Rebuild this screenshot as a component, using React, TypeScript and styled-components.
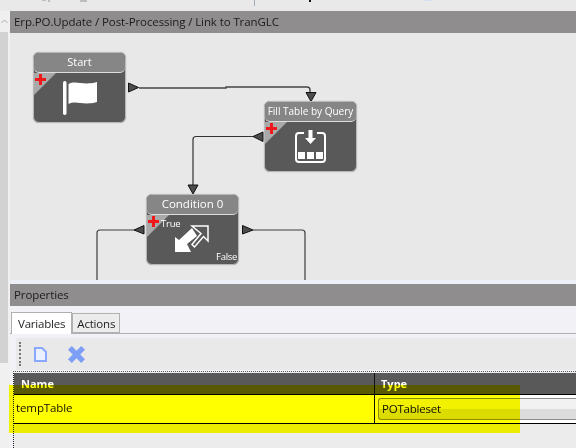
import React from "react";
import styled, { createGlobalStyle } from "styled-components";

const Global = createGlobalStyle`
  html, body { margin: 0; padding: 0; }
  body { width: 576px; height: 448px; overflow: hidden; background: #f0f0f0; font-family: "Open Sans", "Noto Sans", sans-serif; }
`;
const Screen = styled.div`
  position: relative; width: 576px; height: 448px; overflow: hidden; display: grid;
  grid-template-columns: 10px 1fr; grid-template-rows: 11px 1fr; background: #f0f0f0;
`;
const TopStrip = styled.svg`grid-column: 1 / 3; display: block; background: #e9e9e9;`;
const Rail = styled.div`grid-row: 2; width: 8px; height: 352px; display: flex; flex-direction: column; background: #d2d2d2;`;
const RailCap = styled.div`height: 21px; flex: none; background: #efefef; display: flex; align-items: center; justify-content: center;`;
const Main = styled.div`display: flex; flex-direction: column; min-width: 0; grid-row: 2; grid-column: 2;`;
const TitleBar = styled.div`
  height: 22px; flex: none; background: #8f8d8d; color: #1c1c1c; font-size: 11.5px; letter-spacing: -.1px; line-height: 22px; padding-left: 4px;
  white-space: nowrap;
`;
const Canvas = styled.div`position: relative; height: 247px; flex: none; background: #e8e8e8; overflow: hidden;`;
const Gutter = styled.div`height: 4px; flex: none; background: #eef0f8;`;
const Panel = styled.div`flex: 1; background: #f2f2f6; display: flex; flex-direction: column;`;
const Tabs = styled.div`display: flex; align-items: flex-end; height: 28px; flex: none; padding-left: 1px; border-bottom: 1px solid #b0b0b0; box-sizing: border-box;`;
const Tab = styled.div<{ $active?: boolean }>`
  height: ${p => (p.$active ? 22 : 20)}px; box-sizing: border-box; padding: 0 ${p => (p.$active ? 6 : 4)}px;
  background: ${p => (p.$active ? "#fff" : "#ececec")}; border: 1px solid #b0b0b0;
  border-bottom: ${p => (p.$active ? "0" : "1px solid #b0b0b0")}; margin-bottom: ${p => (p.$active ? -1 : 0)}px;
  font-size: 11.5px; letter-spacing: -.2px; line-height: ${p => (p.$active ? 21 : 19)}px; color: #1e1e1e;
`;
const Toolbar = styled.div`
  display: flex; align-items: center; gap: 21px; height: 32px; margin: 4px 0 0 6px; padding-left: 18px; flex: none;
  background: #e9e9e9; border-radius: 3px 0 0 3px; position: relative;
`;
const Grip = styled.div`position: absolute; left: 3px; top: 4px; bottom: 4px; border-left: 2px dotted #777;`;
const Dots = styled.div`height: 1px; flex: none; margin: 1px 0 0 3px; border-top: 1px dotted #555;`;
const Table = styled.div`margin-left: 3px; border-left: 1px dotted #222; flex: 1; display: flex; flex-direction: column; background: #ececec;`;
const Head = styled.div`display: grid; grid-template-columns: 360px 1fr; height: 21px; background: #595959; flex: none; border-bottom: 1px solid #000;`;
const HeadCell = styled.div<{ $rule?: boolean }>`
  color: #fff; font-weight: 700; font-size: 11px; line-height: 21px; padding-left: ${p => (p.$rule ? 6 : 7)}px;
  border-left: ${p => (p.$rule ? "1px solid #111" : "0")};
`;
const Row = styled.div`display: grid; grid-template-columns: 360px 1fr; height: 28px; background: #fff; flex: none; border-bottom: 1px solid #000;`;
const NameCell = styled.div`font-size: 11.5px; letter-spacing: -.1px; line-height: 25px; color: #111; padding-left: 2px;`;
const TypeCell = styled.div`border-left: 1px solid #111; padding: 3px 0 3px 3px;`;
const Combo = styled.div`
  height: 100%; box-sizing: border-box; border: 1px solid #8c8c8c; border-right: 0; border-radius: 3px 0 0 3px; padding-left: 3px;
  background: linear-gradient(#f2f2f2 0 50%, #dcdcdc 50%); font-size: 11.5px; letter-spacing: -.2px; line-height: 19px; color: #111;
`;
const Highlight = styled.div`
  position: absolute; left: 9px; top: 385px; width: 511px; height: 48px; background: #ffff00; mix-blend-mode: multiply; pointer-events: none;
`;
const Node = styled.div<{ $x: number; $y: number }>`
  position: absolute; left: ${p => p.$x}px; top: ${p => p.$y}px; width: 93px; height: 71px; box-sizing: border-box;
  border-radius: 6px; background: #595959; border: 1px solid #b8b8b8; box-shadow: 0 0 1px #999;
`;
const NodeTitle = styled.div<{ $size: number }>`
  height: 19px; background: #868686; border-radius: 5px; border-bottom: 1px solid #ddd; color: #fff; font-size: ${p => p.$size}px; line-height: 18px;
  text-align: center; white-space: nowrap; overflow: hidden;
`;
const Corner = styled.div`
  position: absolute; left: 0; top: 20px; width: 0; height: 0; border-top: 22px solid #a9a9a9; border-right: 22px solid transparent;
`;
const Plus = styled.div`
  position: absolute; left: 1px; top: 21px; width: 11px; height: 11px;
  background: linear-gradient(#f01818,#f01818) center/11px 3px no-repeat, linear-gradient(#f01818,#f01818) center/3px 11px no-repeat;
`;
const TrueLabel = styled.div`position: absolute; color: #fff; font-size: 9.5px; letter-spacing: -.2px; line-height: 11px; left: 14px; top: 23px;`;
const FalseLabel = styled.div`position: absolute; color: #fff; font-size: 9.5px; letter-spacing: -.3px; line-height: 11px; right: 1px; bottom: 2px;`;
const Glyph = styled.svg<{ $x: number; $y: number }>`position: absolute; left: ${p => p.$x}px; top: ${p => p.$y}px; display: block;`;
const Wires = styled.svg`position: absolute; left: 0; top: 0; display: block;`;

const port = (d: string, k: string) => <path key={k} d={d} fill="#4c4c4c" stroke="#111" strokeWidth="1" />;

export default function App() {
  return (
    <Screen>
      <Global />
      <TopStrip width="576" height="11" viewBox="0 0 576 11">
        <path d="M42 0H46V1H42ZM48 0H50V2H48ZM80 0H87V2H80Z" fill="#bdbdbd" />
        <rect x="254" y="0" width="1" height="6" fill="#a4acbc" />
        <rect x="309" y="0" width="2" height="2" fill="#111" />
        <rect x="425" y="0" width="7" height="1" fill="#d4ddf4" />
      </TopStrip>
      <Rail>
        <RailCap>
          <svg width="7" height="5" viewBox="0 0 7 5" fill="none"><path d="M0.5 4L3.5 1L6.5 4" stroke="#aaa" /></svg>
        </RailCap>
      </Rail>
      <Main>
        <TitleBar>Erp.PO.Update / Post-Processing / Link to TranGLC</TitleBar>
        <Canvas>
          <Wires width="566" height="247" fill="none">
            <path d="M129 55H216V54H297Q300 54 300 57V61" stroke="#444" strokeWidth="1.4" />
            <path d="M243 103.5H186Q183 103.5 183 106.5V152" stroke="#333" strokeWidth="1.2" />
            <path d="M125 197H90Q87 197 87 200V247" stroke="#3c3c3c" strokeWidth="1.2" />
            <path d="M243 197H292Q295 197 295 200V247" stroke="#3c3c3c" strokeWidth="1.2" />
            {port("M118.5 50V59L128.5 54.5Z", "a")}
            {port("M296 59.5H306L301 68.5Z", "b")}
            {port("M253 99V108.5L243 103.5Z", "c")}
            {port("M178 152H188L183 161Z", "d")}
            {port("M134 192.5V201L124 197Z", "e")}
            {port("M232.5 192.5V201L243 197Z", "f")}
          </Wires>
          <Node $x={23} $y={19}>
            <NodeTitle $size={11}>Start</NodeTitle>
            <Corner /><Plus />
            <Glyph $x={29} $y={27} width="36" height="36" viewBox="0 0 36 36" fill="#fff">
              <rect x="0" y="1" width="3.5" height="34" rx="1.7" />
              <path d="M5.5 4C13 0 20 6 34 2V22C20 26 13 20 5.5 24Z" />
            </Glyph>
          </Node>
          <Node $x={254} $y={68}>
            <NodeTitle $size={10}>Fill Table by Query</NodeTitle>
            <Corner /><Plus />
            <Glyph $x={29} $y={28} width="34" height="34" viewBox="0 0 34 34" fill="none">
              <path d="M10 3H5Q2 3 2 6V29Q2 32 5 32H28Q31 32 31 29V6Q31 3 28 3H23" stroke="#fff" strokeWidth="2" />
              <path d="M14.5 0H18.5V8H22L16.5 14L11 8H14.5Z" fill="#fff" />
              <path d="M4 22H11V29H4ZM13 22H20V29H13ZM22 22H29V29H22Z" fill="#fff" />
            </Glyph>
          </Node>
          <Node $x={136} $y={161}>
            <NodeTitle $size={11.5}>Condition 0</NodeTitle>
            <Corner /><Plus />
            <TrueLabel>True</TrueLabel>
            <FalseLabel>False</FalseLabel>
            <Glyph $x={28} $y={30} width="35" height="28" viewBox="0 0 35 28" fill="none">
              <path d="M0 27V12L4 15L17 3L22 11L12 19L16 27Z" fill="#fff" />
              <path d="M17 1H33V16L28.5 11.5L19.5 22L17 19.5L26 8.5Z" stroke="#fff" strokeWidth="1.5" />
            </Glyph>
          </Node>
        </Canvas>
        <Gutter />
        <TitleBar>Properties</TitleBar>
        <Panel>
          <Tabs>
            <Tab $active>Variables</Tab>
            <Tab>Actions</Tab>
          </Tabs>
          <Toolbar>
            <Grip />
            <svg width="13" height="15" viewBox="0 0 13 15" fill="#eaf0ff" stroke="#8aa8ff" strokeWidth="2"><path d="M1 1H8L12 5V14H1Z" /></svg>
            <svg width="17" height="17" viewBox="0 0 18 18" fill="#7d9ff5"><path d="M4 0L9 5L14 0L18 4L13 9L18 14L14 18L9 13L4 18L0 14L5 9L0 4Z" /></svg>
          </Toolbar>
          <Dots />
          <Table>
            <Head><HeadCell>Name</HeadCell><HeadCell $rule>Type</HeadCell></Head>
            <Row><NameCell>tempTable</NameCell><TypeCell><Combo>POTableset</Combo></TypeCell></Row>
          </Table>
        </Panel>
      </Main>
      <Highlight />
    </Screen>
  );
}
